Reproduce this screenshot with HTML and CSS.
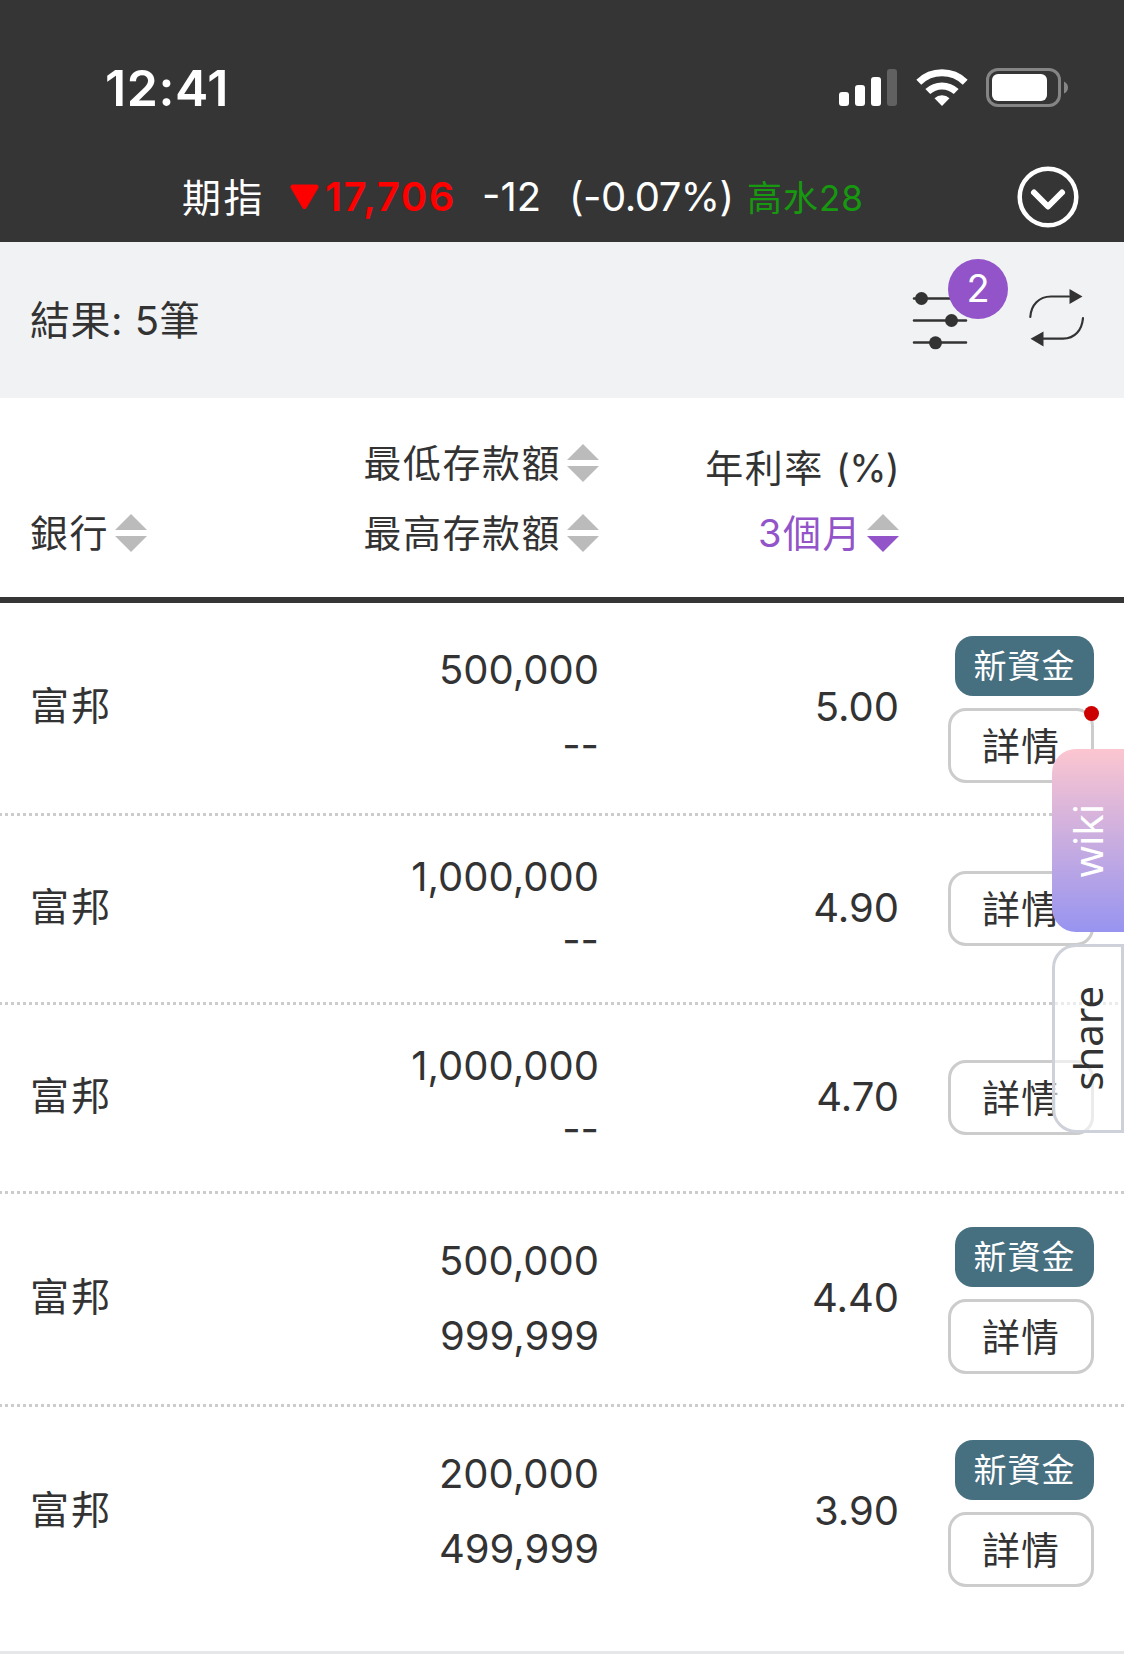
FILE: index.html
```html
<!DOCTYPE html>
<html lang="zh-Hant">
<head>
  <meta charset="UTF-8" />
  <meta name="viewport" content="width=device-width, initial-scale=1.0" />
  <title>定存利率</title>
  <link rel="stylesheet" href="styles.css">
</head>
<body>
  <header>
    <div class="status">
      <span class="time">12:41</span>
      <svg class="status-icons" width="230" height="40" viewBox="0 0 230 40">
        <g fill="#fff">
          <rect x="0" y="24" width="10" height="14" rx="3"/>
          <rect x="16" y="17" width="10" height="21" rx="3"/>
          <rect x="32" y="9" width="10" height="29" rx="3"/>
          <rect x="48" y="1" width="10" height="37" rx="3" opacity=".22"/>
          <path d="M103 38l-7.500-7.800a11 11 0 0 1 15 0z"/>
        </g>
        <g fill="none" stroke="#fff" stroke-width="7">
          <path d="M79.800 14.200a33.300 33.300 0 0 1 46.400 0"/>
          <path d="M88.800 23.600a20.500 20.500 0 0 1 28.400 0"/>
        </g>
        <rect x="148.500" y="1.500" width="72" height="36" rx="10.500" fill="none" stroke="#858585" stroke-width="3"/>
        <rect x="153" y="6" width="55" height="27" rx="6" fill="#fff"/>
        <path d="M225 13.500q4 2 4 6t-4 6z" fill="#858585"/>
      </svg>
    </div>
    <div class="ticker">
      <span class="name">期指</span>
      <svg width="30" height="26" viewBox="0 0 30 26"><path d="M3 3H26L14.500 22.500Z" fill="#f00" stroke="#f00" stroke-width="5" stroke-linejoin="round"/></svg>
      <span class="price">17,706</span>
      <span class="diff">-12</span>
      <span class="percent">(-0.07%)</span>
      <span class="premium">高水28</span>
      <svg class="toggle" width="62" height="62" viewBox="0 0 62 62" fill="none" stroke="#fff">
        <circle cx="31" cy="31" r="28.300" stroke-width="4.500"/>
        <path d="M17 26.500L31 40.500L45 26.500" stroke-width="6" stroke-linecap="round" stroke-linejoin="round"/>
      </svg>
    </div>
  </header>

  <section class="toolbar">
    <span class="result">結果: 5筆</span>
    <div class="filter">
      <svg width="56" height="60" viewBox="0 0 56 60" fill="#333" stroke="#333">
        <path d="M2 8.500H54M2 30.500H54M2 52.500H54" stroke-width="2.600" stroke-linecap="round"/>
        <g stroke="none">
          <circle cx="9.500" cy="8.500" r="6.500"/>
          <circle cx="39.500" cy="30.500" r="6.500"/>
          <circle cx="23.500" cy="52.800" r="6.500"/>
        </g>
      </svg>
      <span class="count">2</span>
    </div>
    <svg class="refresh" width="56" height="60" viewBox="0 0 56 60">
      <g fill="none" stroke="#333" stroke-width="2.200" stroke-linecap="round">
        <path d="M2.300 29C3 17 11 8.500 23 8.500H41"/>
        <path d="M55 30C54 42 47 50.700 35 50.700H15"/>
      </g>
      <path d="M41.500 1V16L54.500 8.500ZM15.500 43.500V58.500L2.500 50.700Z" fill="#333"/>
    </svg>
  </section>

  <section class="head">
    <div class="bank sort-label">銀行<i class="sort"></i></div>
    <div class="amount">
      <div class="sort-label">最低存款額<i class="sort"></i></div>
      <div class="sort-label">最高存款額<i class="sort"></i></div>
    </div>
    <div class="rate">
      <div class="rate-title">年利率 <span class="unit">(%)</span></div>
      <div class="sort-label active">3個月<i class="sort down"></i></div>
    </div>
  </section>

  <main>
    <div class="row new">
      <div class="bank">富邦</div>
      <div class="amount"><span>500,000</span><span>--</span></div>
      <div class="rate">5.00</div>
      <div class="actions">
        <span class="tag">新資金</span>
        <button class="detail">詳情<i class="dot"></i></button>
      </div>
    </div>
    <div class="row">
      <div class="bank">富邦</div>
      <div class="amount"><span>1,000,000</span><span>--</span></div>
      <div class="rate">4.90</div>
      <div class="actions"><button class="detail">詳情</button></div>
    </div>
    <div class="row">
      <div class="bank">富邦</div>
      <div class="amount"><span>1,000,000</span><span>--</span></div>
      <div class="rate">4.70</div>
      <div class="actions"><button class="detail">詳情</button></div>
    </div>
    <div class="row new">
      <div class="bank">富邦</div>
      <div class="amount"><span>500,000</span><span>999,999</span></div>
      <div class="rate">4.40</div>
      <div class="actions">
        <span class="tag">新資金</span>
        <button class="detail">詳情</button>
      </div>
    </div>
    <div class="row new">
      <div class="bank">富邦</div>
      <div class="amount"><span>200,000</span><span>499,999</span></div>
      <div class="rate">3.90</div>
      <div class="actions">
        <span class="tag">新資金</span>
        <button class="detail">詳情</button>
      </div>
    </div>
  </main>

  <aside class="side">
    <a class="wiki"><span>wiki</span></a>
    <a class="share"><span>share</span></a>
  </aside>
</body>
</html>
```
FILE: styles.css
```css
:root {
  --dark: #353535;
  --text: #333;
  --purple: #9254c8;
  --line: #ccc;
}
* {
  margin: 0;
  padding: 0;
  box-sizing: border-box;
}
body {
  font-family: Inter, "Noto Sans CJK TC", sans-serif;
  font-size: 40px;
  line-height: 1;
  color: var(--text);
  background: #fff;
  height: 1657px;
  overflow: hidden;
  position: relative;
}
svg {
  display: block;
}
header {
  background: var(--dark);
  color: #fff;
  height: 242px;
}
.status {
  display: flex;
  justify-content: space-between;
  align-items: center;
  height: 152px;
  padding: 24px 55px 0 105px;
}
.time {
  font-size: 50px;
  font-weight: 600;
  letter-spacing: 0.6px;
}
.ticker {
  display: grid;
  grid-template-columns: 108px 35px 157px 87px 178px 270px 62px;
  align-items: center;
  height: 90px;
  padding-left: 182px;
  white-space: nowrap;
}
.name {
  font-size: 39px;
  letter-spacing: 2.5px;
}
.price {
  color: #f00;
  font-weight: 600;
  letter-spacing: 1.6px;
}
.percent {
  letter-spacing: -0.5px;
}
.premium {
  padding-top: 2px;
  color: #16990f;
  font-size: 35px;
  letter-spacing: 1px;
}
.toolbar {
  display: flex;
  align-items: center;
  height: 156px;
  padding: 0 40px 0 30px;
  background: #f1f2f4;
}
.result {
  flex: 1;
  padding-top: 2px;
  letter-spacing: 0.5px;
}
.filter {
  position: relative;
  margin-right: 60px;
}
.refresh {
  margin-bottom: 4px;
}
.count {
  position: absolute;
  left: 36px;
  top: -31px;
  width: 60px;
  height: 60px;
  border-radius: 50%;
  background: var(--purple);
  color: #fff;
  font-size: 38px;
  line-height: 58px;
  text-align: center;
}
.head,
.row {
  display: grid;
  grid-template-columns: 300px 269px 300px 195px;
  padding: 0 30px;
}
.head {
  height: 205px;
  align-items: end;
  padding-bottom: 29px;
  border-bottom: 6px solid var(--dark);
  font-size: 38px;
  letter-spacing: 1.5px;
}
.sort-label {
  display: flex;
  align-items: center;
  height: 70px;
}
.head .amount .sort-label,
.head .rate .sort-label {
  justify-content: flex-end;
}
.sort {
  width: 32px;
  height: 38px;
  margin-left: 6px;
  background: #bbb;
  clip-path: polygon(50% 0, 100% 16px, 0 16px, 0 22px, 100% 22px, 50% 100%, 0 22px, 0 16px);
}
.sort.down {
  margin-left: 5px;
  background: linear-gradient(#bbb 19px, var(--purple) 19px);
}
.rate-title {
  height: 60px;
  line-height: 60px;
  text-align: right;
}
.unit {
  letter-spacing: -0.7px;
}
.active {
  color: var(--purple);
}
.row {
  align-items: center;
  height: 189px;
  padding-bottom: 4px;
  background: repeating-linear-gradient(90deg, var(--line) 0 2px, transparent 2px 5px, var(--line) 5px 6px) left bottom / 100% 3px no-repeat;
}
.row.new {
  height: 213px;
}
.row:last-child {
  height: 247px;
  padding-bottom: 38px;
  background: linear-gradient(#e5e6e8, #e5e6e8) left bottom / 100% 3px no-repeat;
}
.row .bank {
  padding-bottom: 4px;
  font-size: 39px;
  letter-spacing: 2px;
}
.row .amount {
  display: flex;
  flex-direction: column;
  padding-bottom: 1px;
  text-align: right;
  line-height: 63px;
}
.row.new .amount {
  line-height: 75px;
}
.row .rate {
  padding-bottom: 1px;
  text-align: right;
}
.actions {
  display: flex;
  flex-direction: column;
  align-items: flex-end;
  gap: 12px;
}
.new .actions {
  padding-top: 4px;
}
.tag {
  width: 139px;
  height: 60px;
  border-radius: 18px;
  background: #466f80;
  color: #fff;
  font-size: 33px;
  line-height: 61px;
  letter-spacing: 1px;
  text-align: center;
}
.detail {
  position: relative;
  width: 146px;
  height: 75px;
  border: 3px solid var(--line);
  border-radius: 18px;
  background: #fff;
  color: var(--text);
  font: inherit;
  font-size: 38px;
  letter-spacing: 1px;
}
.dot {
  position: absolute;
  top: -5px;
  right: -8px;
  width: 15px;
  height: 15px;
  border-radius: 50%;
  background: #c00;
}
/* floating tabs on the right edge */
.side {
  position: absolute;
  top: 749px;
  right: 0;
  width: 72px;
  font-family: "Noto Sans", sans-serif;
}
.side a {
  display: flex;
  align-items: center;
  justify-content: center;
  width: 72px;
  border-radius: 24px 0 0 24px;
}
.side span {
  writing-mode: vertical-rl;
  transform: rotate(180deg);
}
.wiki {
  height: 183px;
  color: #fff;
  background: linear-gradient(#fcc6d0, #9794f0);
}
.share {
  height: 189px;
  margin-top: 12px;
  border: 3px solid #ced1d9;
  background: rgba(255, 255, 255, 0.6);
}
```
